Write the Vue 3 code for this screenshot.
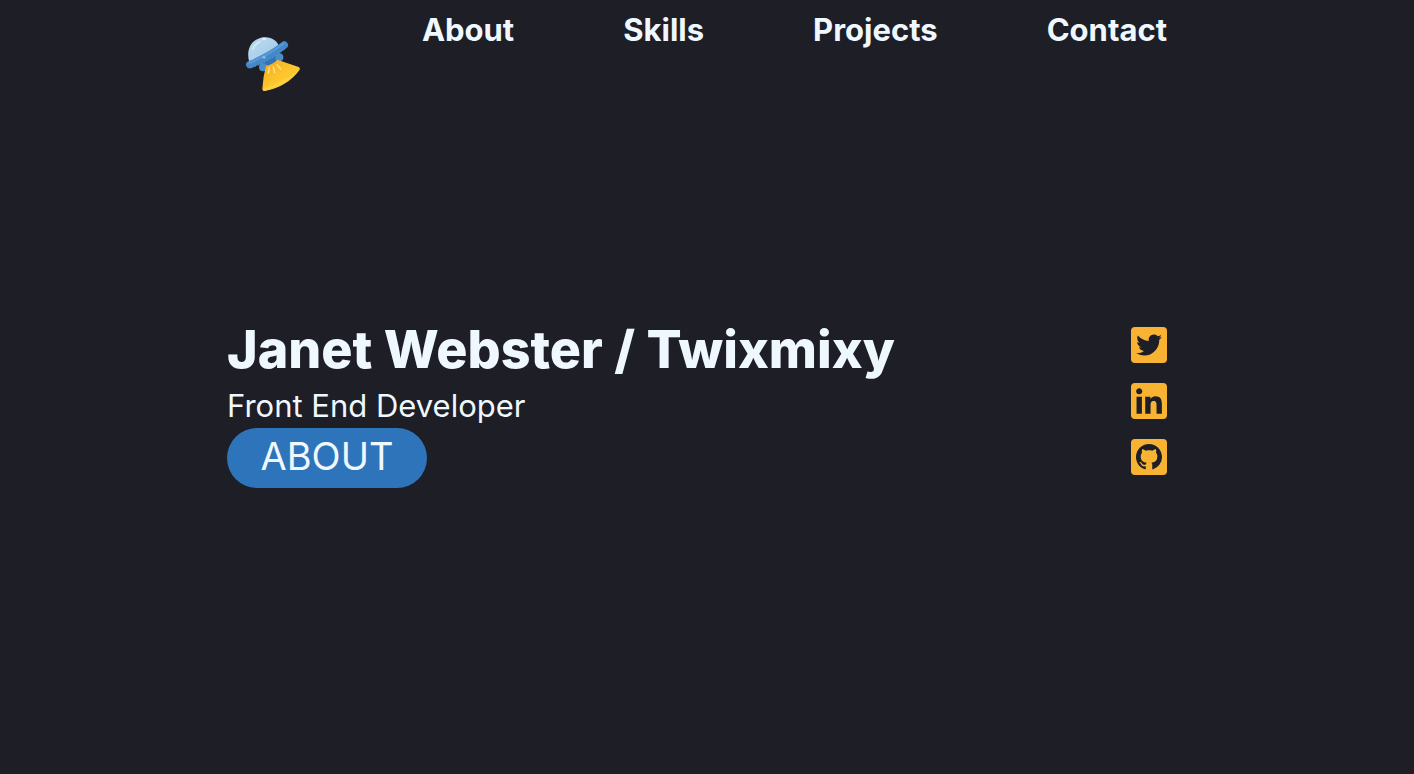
<script setup>
const links = ['About', 'Skills', 'Projects', 'Contact']
const socials = [
  {
    name: 'Twitter',
    d: 'M448 32H0v448h448zm-96.9 158.8c.2 2.8.2 5.7.2 8.5 0 86.7-66 186.6-186.6 186.6-37.2 0-71.7-10.8-100.7-29.4 5.3.6 10.4.8 15.8.8 30.7 0 58.9-10.4 81.4-28-28.8-.6-53-19.5-61.3-45.5 10.1 1.5 19.2 1.5 29.6-1.2-30-6.1-52.5-32.5-52.5-64.4v-.8c8.7 4.9 18.9 7.9 29.6 8.3a65.447 65.447 0 0 1-29.2-54.6c0-12.2 3.2-23.4 8.9-33.1 32.3 39.8 80.8 65.8 135.2 68.6-9.3-44.5 24-80.6 64-80.6 18.9 0 35.9 7.9 47.9 20.7 14.8-2.8 29-8.3 41.6-15.8-4.9 15.2-15.2 28-28.8 36.1 13.2-1.4 26-5.1 37.8-10.2-8.9 13.1-20.1 24.7-32.9 34z'
  },
  {
    name: 'LinkedIn',
    d: 'M448 32H0v448h448zM135.4 416H69V202.2h66.5V416zm-33.2-243c-21.3 0-38.5-17.3-38.5-38.5S80.9 96 102.2 96c21.2 0 38.5 17.3 38.5 38.5 0 21.3-17.2 38.5-38.5 38.5zm282.1 243h-66.4V312c0-24.8-.5-56.7-34.5-56.7-34.6 0-39.9 27-39.9 54.9V416h-66.4V202.2h63.7v29.2h.9c8.9-16.8 30.6-34.5 62.9-34.5 67.2 0 79.7 44.3 79.7 101.9V416z'
  },
  {
    name: 'GitHub',
    d: 'M448 32H0v448h448z',
    mark: 'M8 0C3.58 0 0 3.58 0 8c0 3.54 2.29 6.53 5.47 7.59.4.07.55-.17.55-.38 0-.19-.01-.82-.01-1.49-2.01.37-2.53-.49-2.69-.94-.09-.23-.48-.94-.82-1.13-.28-.15-.68-.52-.01-.53.63-.01 1.08.58 1.23.82.72 1.21 1.87.87 2.33.66.07-.52.28-.87.51-1.07-1.78-.2-3.64-.89-3.64-3.95 0-.87.31-1.59.82-2.15-.08-.2-.36-1.02.08-2.12 0 0 .67-.21 2.2.82.64-.18 1.32-.27 2-.27s1.36.09 2 .27c1.53-1.04 2.2-.82 2.2-.82.44 1.1.16 1.92.08 2.12.51.56.82 1.27.82 2.15 0 3.07-1.87 3.75-3.65 3.95.29.25.54.73.54 1.48 0 1.07-.01 1.93-.01 2.2 0 .21.15.46.55.38A8.01 8.01 0 0016 8c0-4.42-3.58-8-8-8z'
  }
]
</script>

<template>
  <div class="page">
    <header class="header">
      <a class="logo" href="#" aria-label="Home">
        <svg viewBox="0 0 240 225" width="80" height="75" aria-hidden="true">
          <defs>
            <linearGradient id="beam" x1="0" y1="0" x2="1" y2="1">
              <stop offset="0" stop-color="#f6a51f" />
              <stop offset="0.5" stop-color="#fdc52b" />
              <stop offset="1" stop-color="#fbd03a" />
            </linearGradient>
            <linearGradient id="dome" x1="0" y1="0" x2="1" y2="1">
              <stop offset="0" stop-color="#bfdcf1" />
              <stop offset="1" stop-color="#9cc5e8" />
            </linearGradient>
          </defs>
          <path d="M70 116L132 80L138 98Q118 122 88 132Z" fill="#2f73b8" />
          <circle cx="84" cy="127" r="12" fill="#4b8ccb" />
          <circle cx="133" cy="97" r="12" fill="#4b8ccb" />
          <path d="M93 122Q115 118 127 104L191 126Q197 129 194 134Q158 184 92 197Q82 200 82 191Q84 155 93 122Z" fill="url(#beam)" />
          <path d="M84 190Q145 174 192 133Q157 184 90 197Q82 200 84 190Z" fill="#fbd044" />
          <path d="M103 129L100 144M115 126L119 143M126 119L137 132" stroke="#ffe991" stroke-width="4" stroke-linecap="round" fill="none" />
          <path d="M43 112C33 78 46 50 70 41C98 29 129 42 134 70Z" fill="url(#dome)" />
          <path d="M54 72Q60 56 75 50" stroke="#d8ebf7" stroke-width="5" stroke-linecap="round" fill="none" />
          <ellipse cx="87" cy="42" rx="7" ry="4" fill="#dceefa" />
          <path d="M44 119Q101 96 148 60" stroke="#4388c9" stroke-width="22" stroke-linecap="round" fill="none" />
          <path d="M43 114Q98 91 145 56" stroke="#5799d5" stroke-width="7" stroke-linecap="round" fill="none" />
          <path d="M49 129Q106 106 153 70" stroke="#72a9aa" stroke-width="2" stroke-dasharray="5 5" fill="none" />
          <ellipse cx="87" cy="97" rx="5" ry="4" fill="#82bce9" />
        </svg>
      </a>
      <nav class="nav" aria-label="Main">
        <a v-for="link in links" :key="link" href="#">{{ link }}</a>
      </nav>
    </header>
    <main class="hero">
      <div class="intro">
        <h1>Janet Webster / Twixmixy</h1>
        <p>Front End Developer</p>
        <button type="button">ABOUT</button>
      </div>
      <div class="socials">
        <a v-for="item in socials" :key="item.name" href="#" :aria-label="item.name">
          <svg viewBox="0 32 448 448" width="36" height="36" aria-hidden="true">
            <path :d="item.d" fill="currentColor" fill-rule="evenodd" />
            <g v-if="item.mark" transform="translate(62 94) scale(20.25)">
              <path :d="item.mark" class="mark" />
            </g>
          </svg>
        </a>
      </div>
    </main>
  </div>
</template>

<style>
body {
  margin: 0;
  background: #1e1e26;
}
</style>

<style scoped>
.page {
  box-sizing: border-box;
  max-width: 960px;
  min-height: 100vh;
  margin: 0 auto;
  padding-right: 20px;
  color: aliceblue;
  font-family: Inter, "Open Sans", sans-serif;
}
.header {
  display: flex;
  justify-content: space-between;
  align-items: flex-start;
}
.logo {
  margin: 25px 0 0 8px;
}
.logo svg {
  display: block;
}
.nav {
  display: flex;
  gap: 109px;
  padding-top: 10px;
  font-size: 31px;
  line-height: 40px;
  font-weight: 700;
}
.nav a {
  color: inherit;
  text-decoration: none;
}
.hero {
  display: flex;
  justify-content: space-between;
  align-items: flex-start;
  padding-top: 220px;
}
h1 {
  margin: 0;
  font-size: 52px;
  line-height: 60px;
  font-weight: 800;
}
p {
  margin: 6px 0 2px;
  font-size: 31px;
  line-height: 40px;
}
button {
  display: block;
  width: 200px;
  height: 60px;
  padding: 0 0 4px;
  border: 0;
  border-radius: 30px;
  background: #2e74bb;
  color: inherit;
  font-family: inherit;
  font-size: 38px;
  cursor: pointer;
}
.socials {
  display: flex;
  flex-direction: column;
  gap: 20px;
  padding-top: 7px;
  color: #f8b332;
}
.socials a {
  color: inherit;
}
.socials svg {
  display: block;
  border-radius: 4px;
  overflow: hidden;
}
.mark {
  fill: #1e1e26;
}
</style>
